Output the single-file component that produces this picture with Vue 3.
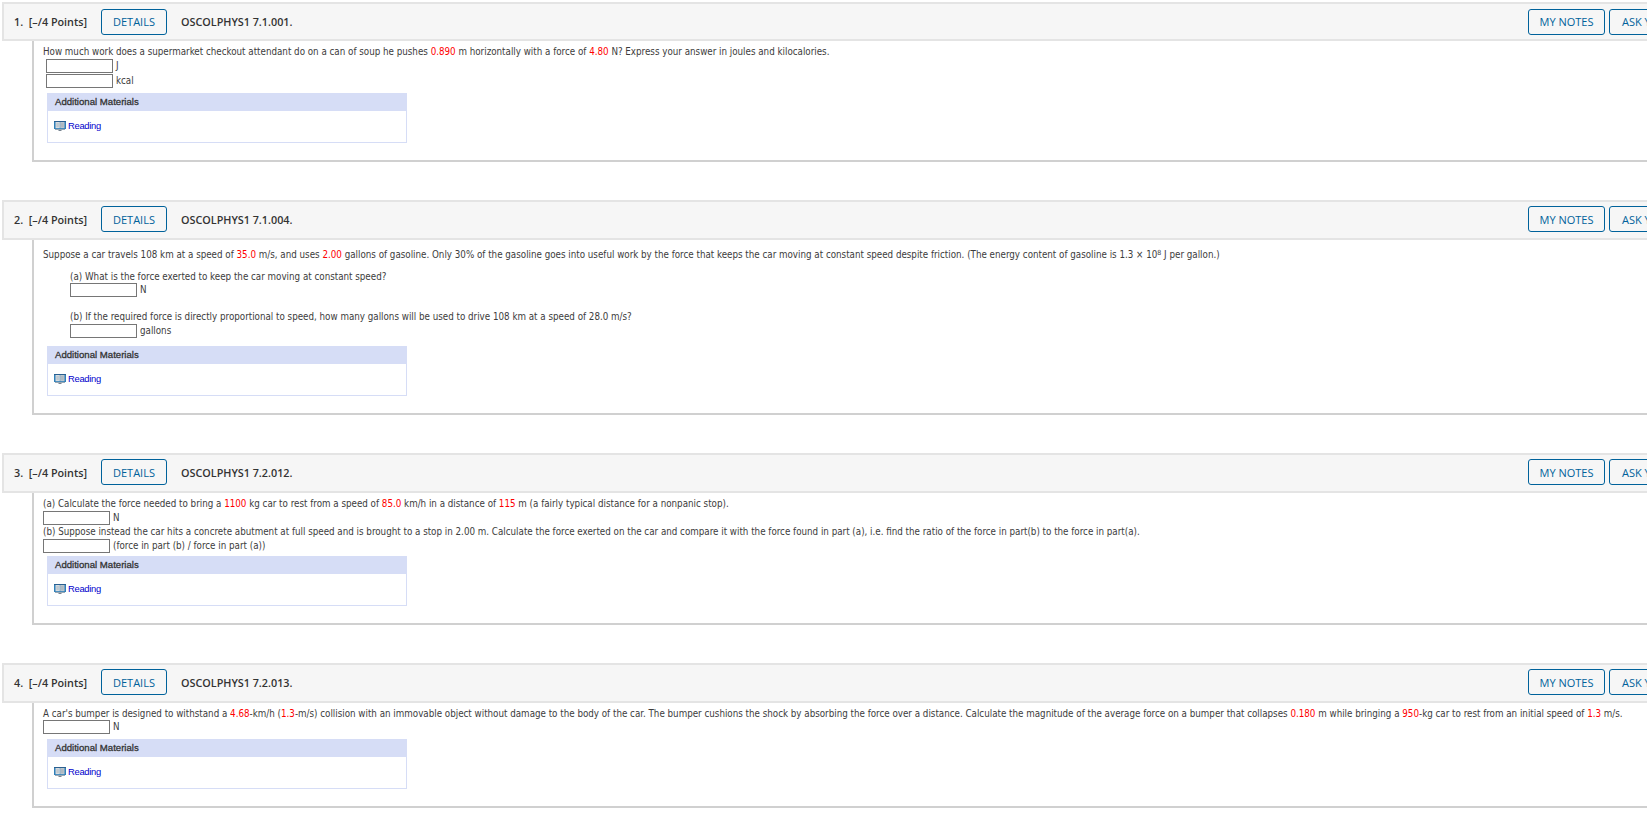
<script setup>
const R = (t) => ({ t, r: true })
const questions = [
  { cls: 'q1', num: '1.', code: 'OSCOLPHYS1 7.1.001.' },
  { cls: 'q2', num: '2.', code: 'OSCOLPHYS1 7.1.004.' },
  { cls: 'q3', num: '3.', code: 'OSCOLPHYS1 7.2.012.' },
  { cls: 'q4', num: '4.', code: 'OSCOLPHYS1 7.2.013.' },
]
const q1 = ['How much work does a supermarket checkout attendant do on a can of soup he pushes ', R('0.890'), ' m horizontally with a force of ', R('4.80'), ' N? Express your answer in joules and kilocalories.']
const q2a = ['Suppose a car travels 108 km at a speed of ', R('35.0'), ' m/s, and uses ', R('2.00'), ' gallons of gasoline. Only 30% of the gasoline goes into useful work by the force that keeps the car moving at constant speed despite friction. (The energy content of gasoline is 1.3 × 10']
const q3a = ['(a) Calculate the force needed to bring a ', R('1100'), ' kg car to rest from a speed of ', R('85.0'), ' km/h in a distance of ', R('115'), ' m (a fairly typical distance for a nonpanic stop).']
const q4 = ["A car's bumper is designed to withstand a ", R('4.68'), '-km/h (', R('1.3'), '-m/s) collision with an immovable object without damage to the body of the car. The bumper cushions the shock by absorbing the force over a distance. Calculate the magnitude of the average force on a bumper that collapses ', R('0.180'), ' m while bringing a ', R('950'), '-kg car to rest from an initial speed of ', R('1.3'), ' m/s.']
const parts = { q1, q2a, q3a, q4 }
const seg = (key) => parts[key].map((s) => (typeof s === 'string' ? { t: s, r: false } : s))
</script>

<template>
  <div class="page">
    <section v-for="q in questions" :key="q.num" class="question" :class="q.cls">
      <header class="head">
        <span class="points">{{ q.num }}&nbsp; [–/4 Points]</span>
        <span class="btn details">DETAILS</span>
        <span class="code">{{ q.code }}</span>
        <span class="btn notes">MY NOTES</span>
        <span class="btn ask">ASK YOUR TEACHER</span>
      </header>
      <div class="body">
        <template v-if="q.cls === 'q1'">
          <p class="line"><span v-for="(s, i) in seg('q1')" :key="i" :class="{ red: s.r }">{{ s.t }}</span></p>
          <div class="answer indent3"><span class="box"></span><span>J</span></div>
          <div class="answer indent3"><span class="box"></span><span>kcal</span></div>
        </template>
        <template v-else-if="q.cls === 'q2'">
          <p class="line"><span v-for="(s, i) in seg('q2a')" :key="i" :class="{ red: s.r }">{{ s.t }}</span><sup>8</sup> J per gallon.)</p>
          <div class="part first">
            <p class="line">(a) What is the force exerted to keep the car moving at constant speed?</p>
            <div class="answer"><span class="box"></span><span>N</span></div>
          </div>
          <div class="part second">
            <p class="line">(b) If the required force is directly proportional to speed, how many gallons will be used to drive 108 km at a speed of 28.0 m/s?</p>
            <div class="answer"><span class="box"></span><span>gallons</span></div>
          </div>
        </template>
        <template v-else-if="q.cls === 'q3'">
          <p class="line"><span v-for="(s, i) in seg('q3a')" :key="i" :class="{ red: s.r }">{{ s.t }}</span></p>
          <div class="answer"><span class="box"></span><span>N</span></div>
          <p class="line">(b) Suppose instead the car hits a concrete abutment at full speed and is brought to a stop in 2.00 m. Calculate the force exerted on the car and compare it with the force found in part (a), i.e. find the ratio of the force in part(b) to the force in part(a).</p>
          <div class="answer"><span class="box"></span><span>(force in part (b) / force in part (a))</span></div>
        </template>
        <template v-else>
          <p class="line"><span v-for="(s, i) in seg('q4')" :key="i" :class="{ red: s.r }">{{ s.t }}</span></p>
          <div class="answer"><span class="box"></span><span>N</span></div>
        </template>
        <div class="materials">
          <div class="mat-head">Additional Materials</div>
          <div class="mat-body">
            <svg class="book" width="12" height="10" viewBox="0 0 12 10">
              <rect x="0" y="0" width="12" height="8" fill="#2f7fb8" />
              <rect x="0" y="0" width="12" height="1" fill="#2a5f8f" />
              <rect x="1.5" y="1" width="4.3" height="6.2" fill="#d5dbe0" />
              <rect x="6.2" y="1" width="4.3" height="6.2" fill="#bcc5cc" />
              <path d="M2.4 3h2.5M2.4 5h2.5M7 3h2.6M7 5h2.6" stroke="#98a4ae" stroke-width="0.7" />
              <rect x="1" y="8" width="10" height="1" fill="#9aa7b3" />
              <rect x="4.5" y="9" width="3" height="1" fill="#76838f" />
            </svg>
            <a class="reading">Reading</a>
          </div>
        </div>
      </div>
    </section>
  </div>
</template>

<style>
html, body { margin: 0; padding: 0; overflow: hidden; background: #fff; }
</style>

<style scoped>
.page {
  width: 1647px;
  height: 821px;
  overflow: hidden;
  padding-top: 2px;
  box-sizing: border-box;
}
.question {
  width: 1800px;
  margin-left: 2px;
}
.q1 { margin-bottom: 38px; }
.q2 { margin-bottom: 38px; }
.q3 { margin-bottom: 38px; }
.head {
  display: flex;
  align-items: center;
  height: 40px;
  box-sizing: border-box;
  background: #f6f6f6;
  border: 2px solid #e4e4e4;
  border-right: 0;
  padding-left: 10px;
  padding-bottom: 2px;
  font-family: "Open Sans", sans-serif;
  font-size: 10.8px;
  color: #333;
}
.q1 .head { height: 39px; padding-bottom: 0; }
.points { font-weight: 600; width: 87px; white-space: nowrap; }
.btn {
  box-sizing: border-box;
  height: 26px;
  display: flex;
  align-items: center;
  justify-content: center;
  border: 1px solid #00629b;
  border-radius: 3px;
  color: #00629b;
  font-size: 11px;
  white-space: nowrap;
}
.details { width: 66px; }
.code { font-weight: 600; margin-left: 14px; }
.notes { width: 77px; margin-left: auto; }
.ask {
  width: 155px;
  margin-left: 4px;
  margin-right: 38px;
  justify-content: flex-start;
  padding-left: 12px;
}
.body {
  margin-left: 30px;
  border-left: 2px solid #d0d0d0;
  border-bottom: 2px solid #d0d0d0;
  padding-left: 9px;
  padding-top: 3px;
  box-sizing: border-box;
  font-family: "DejaVu Sans Condensed", "DejaVu Sans", sans-serif;
  font-stretch: condensed;
  font-size: 9.72px;
  color: #3c3c3c;
}
.line {
  margin: 0;
  height: 15px;
  line-height: 15px;
  white-space: nowrap;
}
.red { color: #f00; }
sup { font-size: 7px; line-height: 0; vertical-align: 3px; }
.answer {
  display: flex;
  align-items: flex-start;
  gap: 3px;
  height: 15px;
  line-height: 14px;
}
.indent3 { margin-left: 3px; }
.box {
  box-sizing: border-box;
  width: 67px;
  height: 14px;
  border: 1px solid #767676;
  background: #fff;
}
.materials {
  width: 360px;
  margin-left: 4px;
  margin-top: 4px;
  box-sizing: border-box;
  border: 1px solid #d6ddf6;
  font-family: "Liberation Sans", sans-serif;
  font-size: 9.6px;
}
.mat-head {
  height: 17px;
  line-height: 15px;
  background: #d6ddf6;
  padding-left: 7px;
  color: #333;
  -webkit-text-stroke: 0.3px #333;
}
.mat-body {
  height: 31px;
  display: flex;
  align-items: center;
  padding: 0 0 2px 6px;
  box-sizing: border-box;
  gap: 2px;
}
.reading { color: #0000cc; font-size: 9.4px; letter-spacing: -0.3px; }

.q1 .body { height: 121px; }

.q2 .body { padding-top: 7px; height: 175px; }
.part { margin-left: 27px; }
.part.first { margin-top: 8px; }
.part.first .line { height: 13px; line-height: 13px; }
.part.second { margin-top: 12px; }
.part.second .line { height: 14px; line-height: 14px; }
.q2 .materials { margin-top: 7px; }

.q3 .body { padding-top: 4px; height: 132px; }
.q3 .line { height: 14px; line-height: 14px; }
.q3 .answer { height: 14px; }
.q3 .materials { margin-top: 3px; }

.q4 .body { padding-top: 4px; height: 105px; }
.q4 .line { height: 13px; line-height: 13px; }
</style>
